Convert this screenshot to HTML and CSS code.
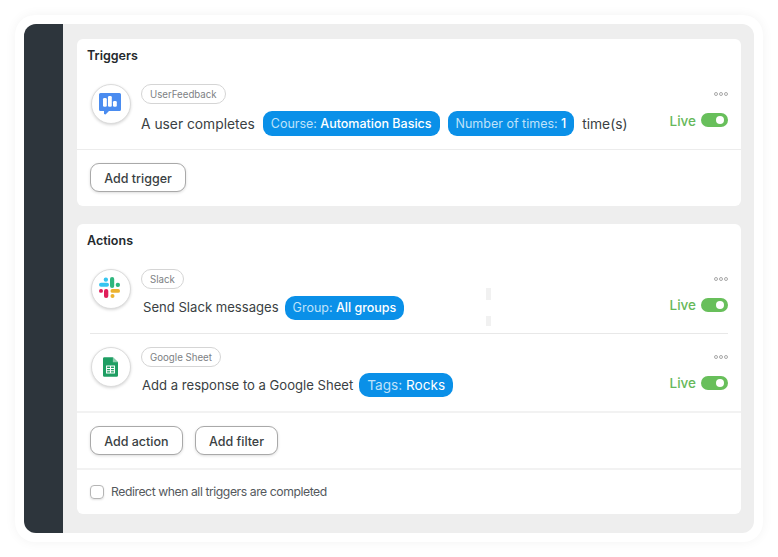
FILE: index.html
```html
<!DOCTYPE html>
<html lang="en">
<head>
<meta charset="utf-8">
<title>Automation</title>
<link rel="stylesheet" href="styles.css">
</head>
<body>
<div class="frame">
  <div class="app">
    <aside class="sidebar"></aside>
    <main class="main">
      <section class="card card-triggers">
        <h2 class="card-title">Triggers</h2>
        <div class="row row-first">
          <div class="avatar">
            <svg class="icon" width="22" height="22" viewBox="0 0 22 22"><path fill="#4a8cf0" d="M1.500 0h19A1.500 1.500 0 0 1 22 1.500v15a1.500 1.500 0 0 1-1.500 1.500H10l-3.500 3.500-1.500-.5V18H1.500A1.500 1.500 0 0 1 0 16.500v-15A1.500 1.500 0 0 1 1.500 0z"/><rect x="4" y="5" width="3.800" height="8.700" rx="1.300" fill="#fff"/><rect x="9" y="3" width="3.800" height="10.700" rx="1.300" fill="#fff"/><rect x="14" y="8" width="3.800" height="5.700" rx="1.300" fill="#fff"/></svg>
          </div>
          <div class="body">
            <span class="chip">UserFeedback</span>
            <div class="line">
              <span class="text text-large">A user completes</span>
              <span class="pill"><span class="key">Course:</span> Automation Basics</span>
              <span class="pill"><span class="key">Number of times:</span> 1</span>
              <span class="text text-large">time(s)</span>
            </div>
          </div>
          <div class="status">
            <span class="dots"><i></i><i></i><i></i></span>
            <div class="live"><span class="live-label">Live</span><span class="toggle"></span></div>
          </div>
        </div>
        <div class="footer footer-trigger">
          <button class="btn">Add trigger</button>
        </div>
      </section>

      <section class="card card-actions">
        <h2 class="card-title">Actions</h2>
        <div class="row row-slack">
          <div class="avatar">
            <svg class="icon icon-slack" width="21" height="21" viewBox="0 0 21 21">
              <rect x="0" y="5.700" width="10" height="4" rx="2" fill="#36c5f0"/><rect x="4.700" y="0.500" width="4.300" height="4.300" rx="2" fill="#36c5f0"/>
              <rect x="11" y="0" width="4.200" height="11" rx="2.100" fill="#2eb67d"/><rect x="16.700" y="5.800" width="4.300" height="4.300" rx="2" fill="#2eb67d"/>
              <rect x="11.500" y="12" width="9.500" height="3.800" rx="1.900" fill="#ecb22e"/><rect x="11.500" y="17" width="4" height="4" rx="2" fill="#ecb22e"/>
              <rect x="5" y="12" width="4.300" height="9" rx="2.100" fill="#e01e5a"/><rect x="0" y="12" width="4" height="3.800" rx="1.900" fill="#e01e5a"/>
            </svg>
          </div>
          <div class="body">
            <span class="chip">Slack</span>
            <div class="line line-slack">
              <span class="text">Send Slack messages</span>
              <span class="pill pill-short"><span class="key">Group:</span> All groups</span>
            </div>
          </div>
          <div class="status">
            <span class="dots"><i></i><i></i><i></i></span>
            <div class="live live-action"><span class="live-label">Live</span><span class="toggle"></span></div>
          </div>
          <span class="smudge smudge-a"></span>
          <span class="smudge smudge-b"></span>
        </div>
        <div class="row row-sheet">
          <div class="avatar">
            <svg class="icon" width="15" height="20" viewBox="0 0 16 21"><path fill="#1e9e63" d="M1.500 0H10.500L16 5.500V19.500A1.500 1.500 0 0 1 14.500 21H1.500A1.500 1.500 0 0 1 0 19.500V1.500A1.500 1.500 0 0 1 1.500 0z"/><path fill="#8fd0b0" d="M10.500 0L16 5.500H10.500z"/><path fill="none" stroke="#fff" stroke-width="1.100" d="M3.800 9.500h8.400v7.500H3.800zM3.800 12h8.400M3.800 14.500h8.400M8 9.500v7.500"/></svg>
          </div>
          <div class="body">
            <span class="chip">Google Sheet</span>
            <div class="line line-sheet">
              <span class="text">Add a response to a Google Sheet</span>
              <span class="pill pill-short pill-large"><span class="key">Tags:</span> Rocks</span>
            </div>
          </div>
          <div class="status">
            <span class="dots"><i></i><i></i><i></i></span>
            <div class="live live-action"><span class="live-label">Live</span><span class="toggle"></span></div>
          </div>
        </div>
        <div class="footer footer-action">
          <button class="btn">Add action</button>
          <button class="btn">Add filter</button>
        </div>
        <label class="redirect">
          <span class="checkbox"></span>
          <span>Redirect when all triggers are completed</span>
        </label>
      </section>
    </main>
  </div>
</div>
</body>
</html>
```
FILE: styles.css
```css
* { box-sizing: border-box; }
html, body { margin: 0; height: 100%; background: #fff; }
body {
  width: 778px;
  height: 557px;
  overflow: hidden;
  padding: 15px;
  font-family: Inter, "Liberation Sans", sans-serif;
  color: #33383c;
}
.frame {
  height: 527px;
  padding: 9px;
  background: #fff;
  border-radius: 20px;
  box-shadow: 0 0 12px rgba(0, 0, 0, 0.05);
}
.app {
  display: flex;
  height: 509px;
  background: #eeeeee;
  border-radius: 12px;
  overflow: hidden;
}
.sidebar { width: 39px; flex: none; background: #2d353c; }
.main {
  flex: 1;
  display: flex;
  flex-direction: column;
  gap: 18px;
  padding: 15px 13px 0 14px;
}
.card {
  background: #fff;
  border-radius: 6px;
}
.card-triggers { height: 167px; }
.card-actions { height: 290px; }
.card-title {
  margin: 0;
  padding: 9px 10px 0;
  font-size: 12.500px;
  line-height: 16px;
  font-weight: 600;
  color: #24292d;
}
.row {
  position: relative;
  display: flex;
  margin: 0 13px;
  gap: 10px;
}
.row-first { margin-top: 20px; height: 65px; }
.row-slack { margin-top: 20px; height: 65px; border-bottom: 1px solid #e8e8e8; }
.row-sheet { padding-top: 13px; height: 77px; }
.avatar {
  width: 40px;
  height: 40px;
  margin-left: 1px;
  flex: none;
  display: flex;
  align-items: center;
  justify-content: center;
  background: #fff;
  border: 1px solid #dcdcdc;
  border-radius: 50%;
  box-shadow: 0 1px 3px rgba(0, 0, 0, 0.16);
}
.icon { margin-right: 2px; }
.icon-slack { margin: 0 3px 3px 0; }
.body { flex: 1; min-width: 0; }
.chip {
  display: inline-block;
  height: 20px;
  padding: 0 8px;
  border: 1px solid #d5d5d5;
  border-radius: 10px;
  font-size: 9.700px;
  line-height: 19px;
  color: #7d8184;
  vertical-align: top;
}
.line {
  display: flex;
  align-items: center;
  gap: 8px;
  margin-top: 7px;
  height: 25px;
}
.line-slack { margin-left: 2px; gap: 6px; margin-top: 6px; }
.line-sheet { margin-left: 1px; gap: 6px; margin-top: 5px; }
.text { font-size: 13.100px; color: #3a3f43; white-space: nowrap; }
.line-slack .text { padding-bottom: 1px; }
.line-sheet .text { padding-top: 1px; }
.text-large { font-size: 13.800px; }
.pill {
  display: inline-block;
  height: 25px;
  padding: 0 8px;
  border-radius: 9px;
  background: #0a90e8;
  color: #fff;
  font-size: 12.500px;
  line-height: 25px;
  font-weight: 500;
  white-space: nowrap;
}
.pill-short { height: 24px; line-height: 24px; border-radius: 10px; }
.pill-large { font-size: 13.600px; font-weight: 400; }
.key { font-weight: 400; color: #bfe2fa; }
.status {
  display: flex;
  flex-direction: column;
  align-items: flex-end;
  flex: none;
  padding-top: 8px;
}
.dots { display: flex; gap: 1px; height: 4px; }
.dots i {
  width: 4px;
  height: 4px;
  border: 1px solid #a9a9a9;
  border-radius: 50%;
}
.live {
  display: flex;
  align-items: center;
  gap: 5px;
  margin-top: 17px;
  height: 14px;
  font-size: 13.500px;
  font-weight: 500;
  color: #66b85a;
}
.live-label { padding-top: 2px; }
.live-action .live-label { padding-top: 0; }
.toggle {
  position: relative;
  width: 27px;
  height: 14px;
  border-radius: 7px;
  background: #68bf5b;
}
.toggle::after {
  content: "";
  position: absolute;
  right: 4px;
  top: 3px;
  width: 8px;
  height: 8px;
  border-radius: 50%;
  background: #fff;
}
.smudge { position: absolute; left: 396px; width: 5px; background: #f1f1f1; }
.smudge-a { top: 19px; height: 12px; }
.smudge-b { top: 47px; height: 10px; }
.footer {
  display: flex;
  gap: 12px;
  padding-left: 13px;
  border-top: 1px solid #ececec;
}
.footer-trigger { height: 57px; padding-top: 13px; }
.footer-action { height: 59px; padding-top: 13px; border-top: 2px solid #f2f2f2; border-bottom: 2px solid #f2f2f2; }
.btn {
  height: 29px;
  padding: 1px 13.200px 0;
  background: #fff;
  border: 1px solid #a9a9a9;
  border-radius: 9px;
  box-shadow: 0 1px 3px rgba(0, 0, 0, 0.14);
  font: 500 12.500px Inter, "Liberation Sans", sans-serif;
  color: #3a3f43;
}
.redirect {
  display: flex;
  align-items: center;
  gap: 7px;
  padding: 14px 13px 0;
  font-size: 12.200px;
  letter-spacing: -0.43px;
  color: #54595d;
}
.checkbox {
  width: 14px;
  height: 14px;
  border: 1px solid #b5b5b5;
  border-radius: 4px;
  box-shadow: 0 1px 2px rgba(0, 0, 0, 0.12);
}
```
